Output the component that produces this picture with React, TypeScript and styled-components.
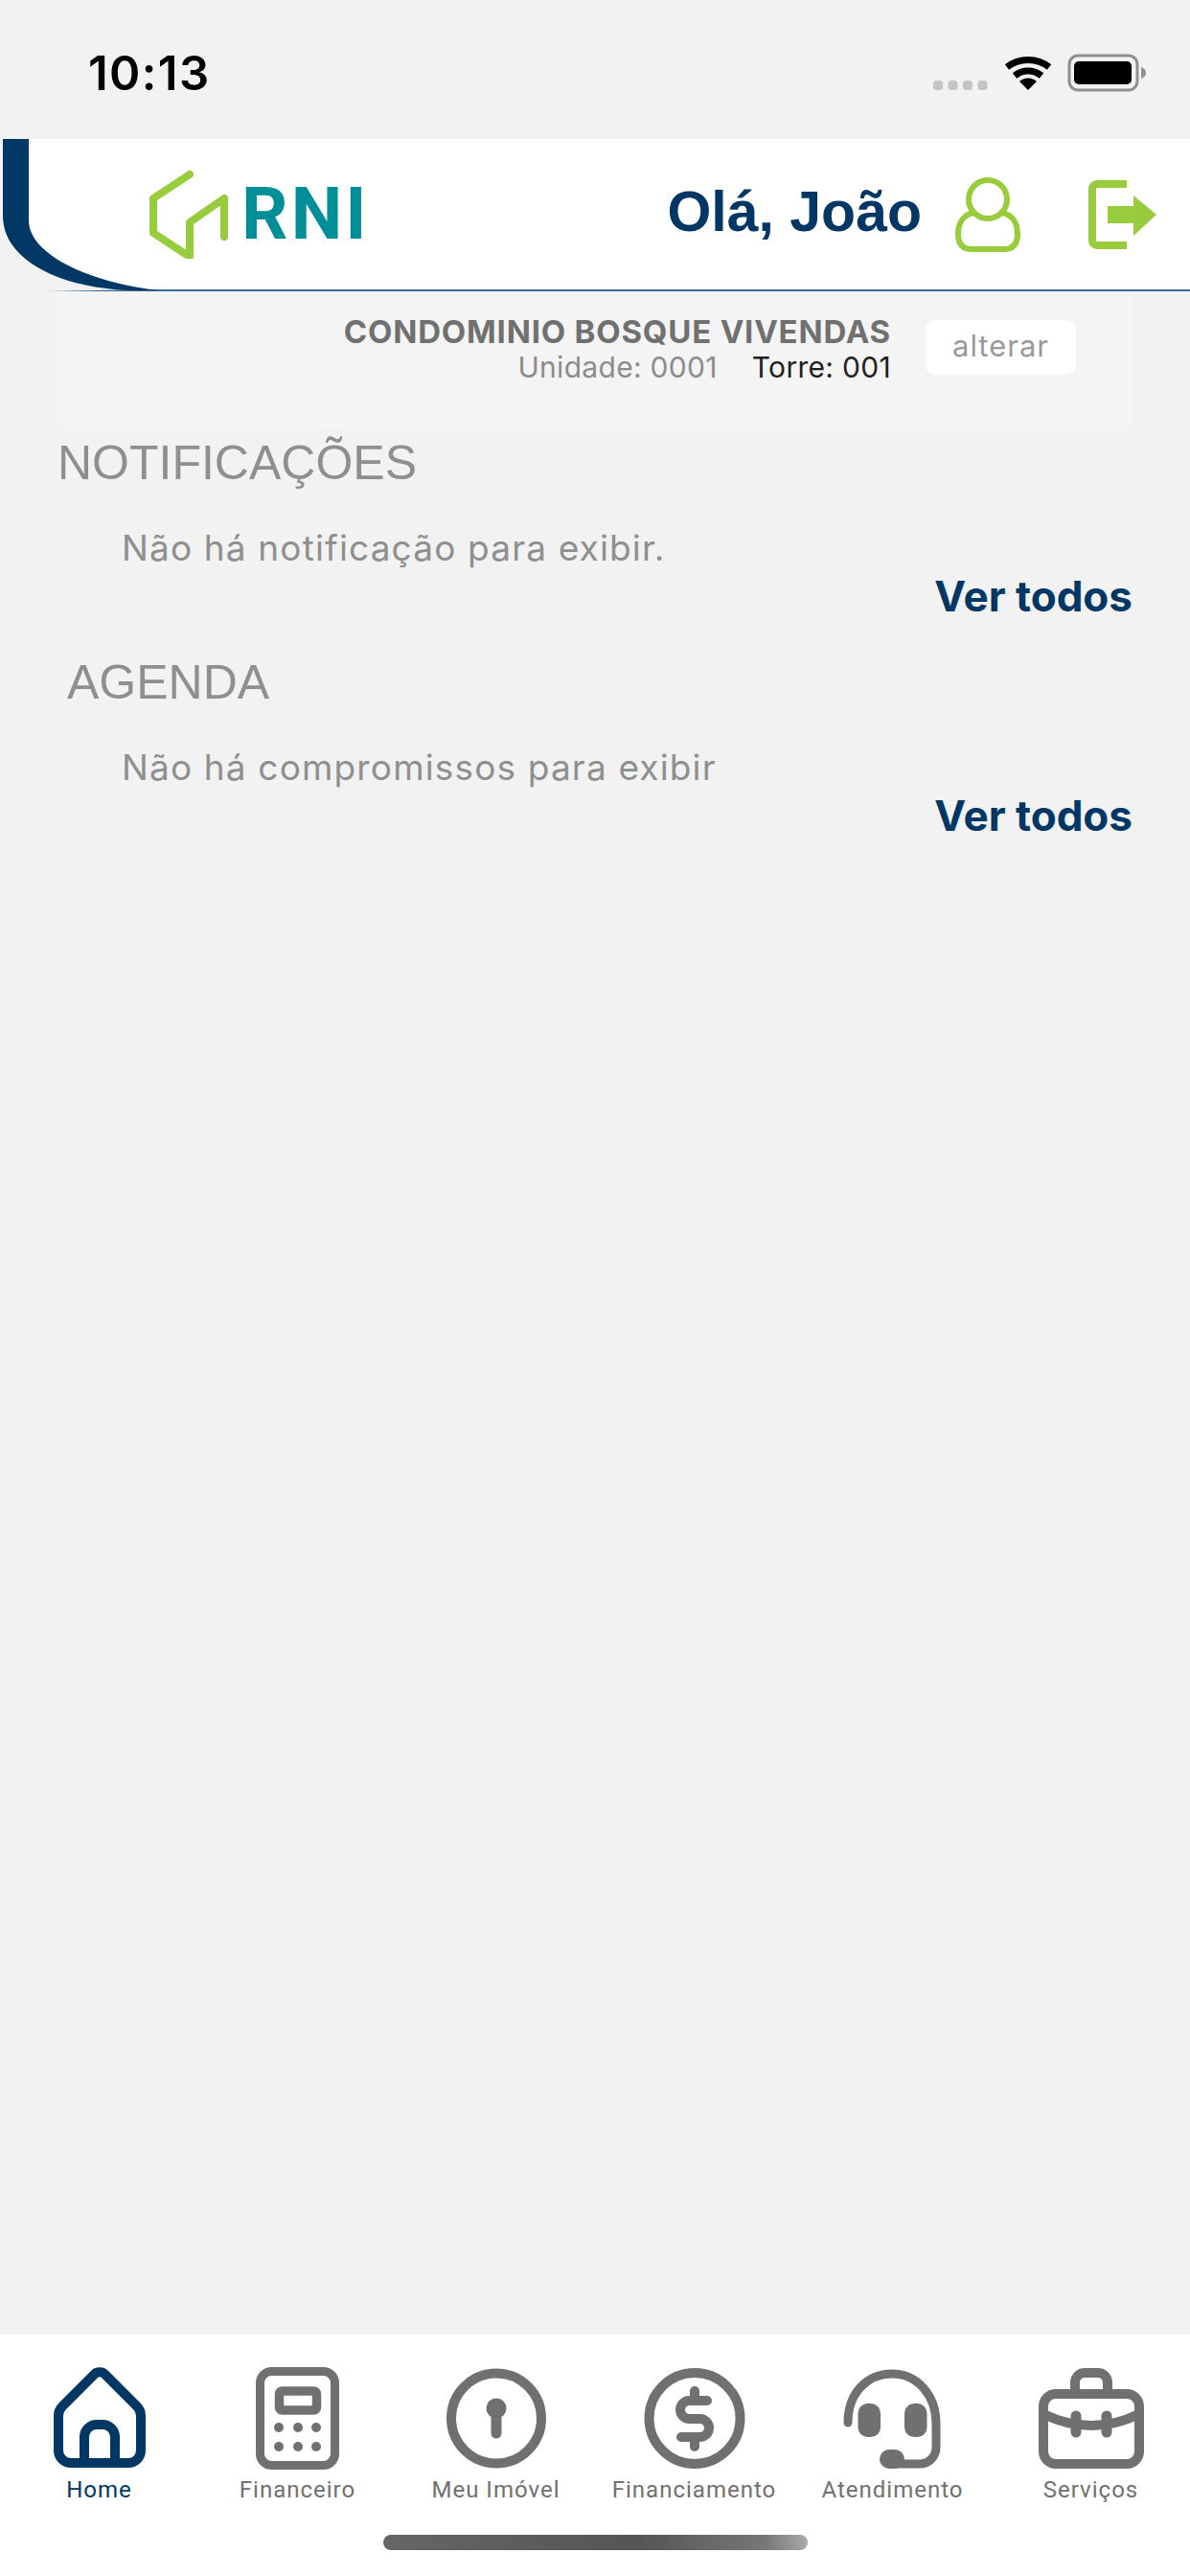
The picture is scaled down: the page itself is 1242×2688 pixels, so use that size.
import styled, { createGlobalStyle } from 'styled-components';

const navy = '#003764';
const green = '#99cc3d';
const gray = '#707070';

const GlobalStyle = createGlobalStyle`
  html, body {
    margin: 0;
    padding: 0;
    background: #f2f2f2;
  }
`;

const Page = styled.div`
  width: 1242px;
  height: 2688px;
  display: flex;
  flex-direction: column;
  overflow: hidden;
  background: #f2f2f2;
  font-family: Inter, "Liberation Sans", sans-serif;
`;

const StatusBar = styled.div`
  height: 145px;
  flex: none;
  display: flex;
  align-items: flex-start;
  justify-content: space-between;
  padding: 0 46px 0 92px;
  box-sizing: border-box;
`;

const Clock = styled.span`
  margin-top: 47px;
  font-size: 49px;
  line-height: 60px;
  font-weight: 600;
  letter-spacing: 1.4px;
  color: #000;
`;

const StatusIcons = styled.svg`
  margin-top: 50px;
  width: 222px;
  height: 50px;
`;

const Header = styled.header`
  position: relative;
  height: 159px;
  flex: none;
  display: flex;
  align-items: center;
  box-sizing: border-box;
  background: #fff;
  border-bottom: 2px solid #3b6a94;
  padding: 0 34px 0 155px;
`;

const Swoosh = styled.svg`
  position: absolute;
  left: 0;
  top: 0;
  width: 200px;
  height: 160px;
`;

const Logo = styled.div`
  display: flex;
  align-items: center;
  gap: 9px;
`;

const LogoMark = styled.svg`
  width: 88px;
  height: 92px;
`;

const LogoText = styled.span`
  font-family: Roboto, sans-serif;
  font-size: 76px;
  line-height: 76px;
  font-weight: 700;
  letter-spacing: 3px;
  color: #008e99;
  margin-top: -2px;
`;

const Greeting = styled.span`
  margin: 0 0 6px auto;
  font-family: "Liberation Sans", sans-serif;
  font-size: 59px;
  line-height: 70px;
  font-weight: 700;
  color: ${navy};
`;

const HeaderIcon = styled.svg<{ $gap: number }>`
  margin-left: ${(p) => p.$gap}px;
  flex: none;
`;

const Panel = styled.section`
  height: 144px;
  flex: none;
  margin: 0 60px;
  padding: 24px 59px 0 0;
  box-sizing: border-box;
  background: #f4f4f4;
  display: flex;
  justify-content: flex-end;
  align-items: flex-start;
  gap: 36px;
`;

const Condo = styled.div`
  display: flex;
  flex-direction: column;
  align-items: flex-end;
`;

const CondoName = styled.div`
  font-size: 33px;
  line-height: 36px;
  font-weight: 700;
  letter-spacing: 0.8px;
  color: ${gray};
`;

const CondoMeta = styled.div`
  display: flex;
  gap: 36px;
  font-size: 30px;
  line-height: 38px;
  letter-spacing: 0.3px;
`;

const Meta = styled.span<{ $dark?: boolean }>`
  color: ${(p) => (p.$dark ? '#231f20' : '#8c8c8c')};
`;

const ChangeButton = styled.button`
  width: 157px;
  height: 57px;
  margin-top: 6px;
  border: 0;
  padding: 0 0 5px;
  border-radius: 10px;
  background: #fff;
  color: #999;
  font: 400 31px Inter, sans-serif;
  letter-spacing: 1px;
`;

const Content = styled.main`
  flex: 1;
  padding: 0 60px;
`;

const Block = styled.div`
  display: flex;
  flex-direction: column;
  margin-bottom: 30px;
`;

const SectionTitle = styled.h2<{ $indent?: number }>`
  margin: 5px 0 0 ${(p) => p.$indent ?? 0}px;
  font-family: "Liberation Sans", sans-serif;
  font-size: 50px;
  line-height: 60px;
  font-weight: 400;
  color: #8f8f8f;
`;

const EmptyText = styled.p`
  margin: 36px 0 0 67px;
  font-size: 37px;
  line-height: 46px;
  letter-spacing: 1.15px;
  color: #8f8f8f;
`;

const SeeAll = styled.a`
  align-self: flex-end;
  margin-top: 2px;
  font-size: 44px;
  line-height: 50px;
  font-weight: 700;
  color: ${navy};
`;

const TabBar = styled.nav`
  position: relative;
  height: 252px;
  flex: none;
  background: #fff;
  display: grid;
  grid-template-columns: repeat(6, 1fr);
  padding-top: 33px;
  box-sizing: border-box;
  align-items: start;
`;

const Tab = styled.div<{ $active?: boolean }>`
  display: flex;
  flex-direction: column;
  align-items: center;
  color: ${(p) => (p.$active ? navy : gray)};
`;

const TabIcon = styled.svg`
  width: 110px;
  height: 110px;
`;

const TabLabel = styled.span`
  margin-top: 4px;
  font-family: Roboto, sans-serif;
  font-size: 24px;
  line-height: 30px;
  letter-spacing: 1px;
`;

const HomeIndicator = styled.div`
  position: absolute;
  left: 400px;
  bottom: 27px;
  width: 443px;
  height: 16px;
  border-radius: 8px;
  background: linear-gradient(90deg, #666 0%, #555 60%, #777 90%, #aaa 100%);
`;

const tabs = [
  {
    label: 'Home',
    icon: (
      <g fill="none" stroke="currentColor" strokeWidth="10" strokeLinejoin="round">
        <path d="M49 9a8 8 0 0 1 12 0L94 42q4 4 4 10V88a13 13 0 0 1-13 13H25a13 13 0 0 1-13-13V52q0-6 4-10Z" />
        <path d="M39 101V74a13 13 0 0 1 13-13h6a13 13 0 0 1 13 13V101" />
      </g>
    ),
  },
  {
    label: 'Financeiro',
    icon: (
      <g>
        <rect x="15.5" y="5.5" width="78" height="98" rx="12" fill="none" stroke="currentColor" strokeWidth="9" />
        <rect x="35.5" y="26" width="39" height="20" rx="3" fill="none" stroke="currentColor" strokeWidth="9.5" />
        {[35, 55, 74].map((x) =>
          [64, 84].map((y) => <circle key={`${x}-${y}`} cx={x} cy={y} r="5" fill="currentColor" />),
        )}
      </g>
    ),
  },
  {
    label: 'Meu Imóvel',
    icon: (
      <g>
        <circle cx="55" cy="54.5" r="47" fill="none" stroke="currentColor" strokeWidth="10" />
        <circle cx="55" cy="44" r="10.5" fill="currentColor" />
        <path d="M55 46V70" stroke="currentColor" strokeWidth="11" strokeLinecap="round" />
      </g>
    ),
  },
  {
    label: 'Financiamento',
    icon: (
      <g fill="none" stroke="currentColor">
        <circle cx="55" cy="54.5" r="47.5" strokeWidth="10" />
        <path
          d="M68 36H49.5a9.5 9.5 0 0 0 0 19h11a9.5 9.5 0 0 1 0 19H41M55 26V36M55 74V84"
          strokeWidth="10"
          strokeLinecap="round"
        />
      </g>
    ),
  },
  {
    label: 'Atendimento',
    icon: (
      <g>
        <path
          d="M8 59C8 28 28 8 54 8C80 8 100 30 100 60V85a17 17 0 0 1-17 17H55"
          fill="none"
          stroke="currentColor"
          strokeWidth="9"
          strokeLinecap="round"
        />
        <rect x="18.5" y="39" width="23.5" height="35" rx="10" fill="currentColor" />
        <rect x="67" y="39" width="23.5" height="35" rx="10" fill="currentColor" />
        <rect x="41" y="87" width="26" height="20" rx="10" fill="currentColor" />
      </g>
    ),
  },
  {
    label: 'Serviços',
    icon: (
      <g fill="none" stroke="currentColor" strokeWidth="10">
        <rect x="5" y="29" width="100" height="73" rx="13" />
        <path d="M38 28V17a10 10 0 0 1 10-10h14a10 10 0 0 1 10 10V28" />
        <path d="M5 50Q55 74 105 50" />
        <path d="M39 52V69M71 52V69" strokeWidth="11" strokeLinecap="round" />
      </g>
    ),
  },
];

export default function App() {
  return (
    <Page>
      <GlobalStyle />
      <StatusBar>
        <Clock>10:13</Clock>
        <StatusIcons viewBox="0 0 222 50">
          <g fill="#c4c4c4">
            <rect x="0" y="34" width="10" height="10" rx="3.5" />
            <rect x="15.5" y="34" width="10" height="10" rx="3.5" />
            <rect x="31" y="34" width="10" height="10" rx="3.5" />
            <rect x="46.5" y="34" width="10" height="10" rx="3.5" />
          </g>
          <g fill="none" stroke="#000" strokeWidth="7">
            <path d="M77 20a36 36 0 0 1 44 0" />
            <path d="M85 29a22 22 0 0 1 28 0" />
          </g>
          <path d="M99 44l-9-9a13 13 0 0 1 18 0Z" fill="#000" />
          <rect x="142" y="8" width="71" height="36" rx="9" fill="none" stroke="#8f8f8f" strokeWidth="3" />
          <rect x="147" y="14" width="60" height="24" rx="5" fill="#000" />
          <path d="M217 20c3 1 5 3 5 6s-2 5-5 6Z" fill="#8f8f8f" />
        </StatusIcons>
      </StatusBar>

      <Header>
        <Swoosh viewBox="0 0 200 160">
          <path d="M0 0H3V85C3 130 70 157 150 157L0 160Z" fill="#f2f2f2" />
          <path d="M3 0H30V85C30 118 85 148 165 158H140C70 157 3 130 3 80Z" fill={navy} />
        </Swoosh>
        <Logo>
          <LogoMark viewBox="0 0 88 92">
            <path
              d="M43 4L5 29V65L43 90V54L79 29V69"
              fill="none"
              stroke={green}
              strokeWidth="8"
              strokeLinecap="round"
              strokeLinejoin="round"
            />
          </LogoMark>
          <LogoText>RNI</LogoText>
        </Logo>
        <Greeting>Olá, João</Greeting>
        <HeaderIcon $gap={34} width="70" height="80" viewBox="0 0 70 80">
          <g fill="none" stroke={green} strokeWidth="6">
            <ellipse cx="35" cy="24" rx="20" ry="20" />
            <path d="M20 38C10 40 4 48 4 60C4 70 8 76 18 76H52C62 76 66 70 66 60C66 48 60 40 50 38" />
          </g>
        </HeaderIcon>
        <HeaderIcon $gap={70} width="72" height="72" viewBox="0 0 72 72">
          <path d="M40 4H9a5 5 0 0 0-5 5V63a5 5 0 0 0 5 5H40" fill="none" stroke={green} strokeWidth="8" />
          <path d="M20 27H47V16L71 36L47 58V45H20Z" fill={green} />
        </HeaderIcon>
      </Header>

      <Panel>
        <Condo>
          <CondoName>CONDOMINIO BOSQUE VIVENDAS</CondoName>
          <CondoMeta>
            <Meta>Unidade: 0001</Meta>
            <Meta $dark>Torre: 001</Meta>
          </CondoMeta>
        </Condo>
        <ChangeButton>alterar</ChangeButton>
      </Panel>

      <Content>
        <Block>
          <SectionTitle>NOTIFICAÇÕES</SectionTitle>
          <EmptyText>Não há notificação para exibir.</EmptyText>
          <SeeAll>Ver todos</SeeAll>
        </Block>
        <Block>
          <SectionTitle $indent={10}>AGENDA</SectionTitle>
          <EmptyText>Não há compromissos para exibir</EmptyText>
          <SeeAll>Ver todos</SeeAll>
        </Block>
      </Content>

      <TabBar>
        {tabs.map((tab, i) => (
          <Tab key={tab.label} $active={i === 0}>
            <TabIcon viewBox="0 0 110 110">{tab.icon}</TabIcon>
            <TabLabel>{tab.label}</TabLabel>
          </Tab>
        ))}
        <HomeIndicator />
      </TabBar>
    </Page>
  );
}
